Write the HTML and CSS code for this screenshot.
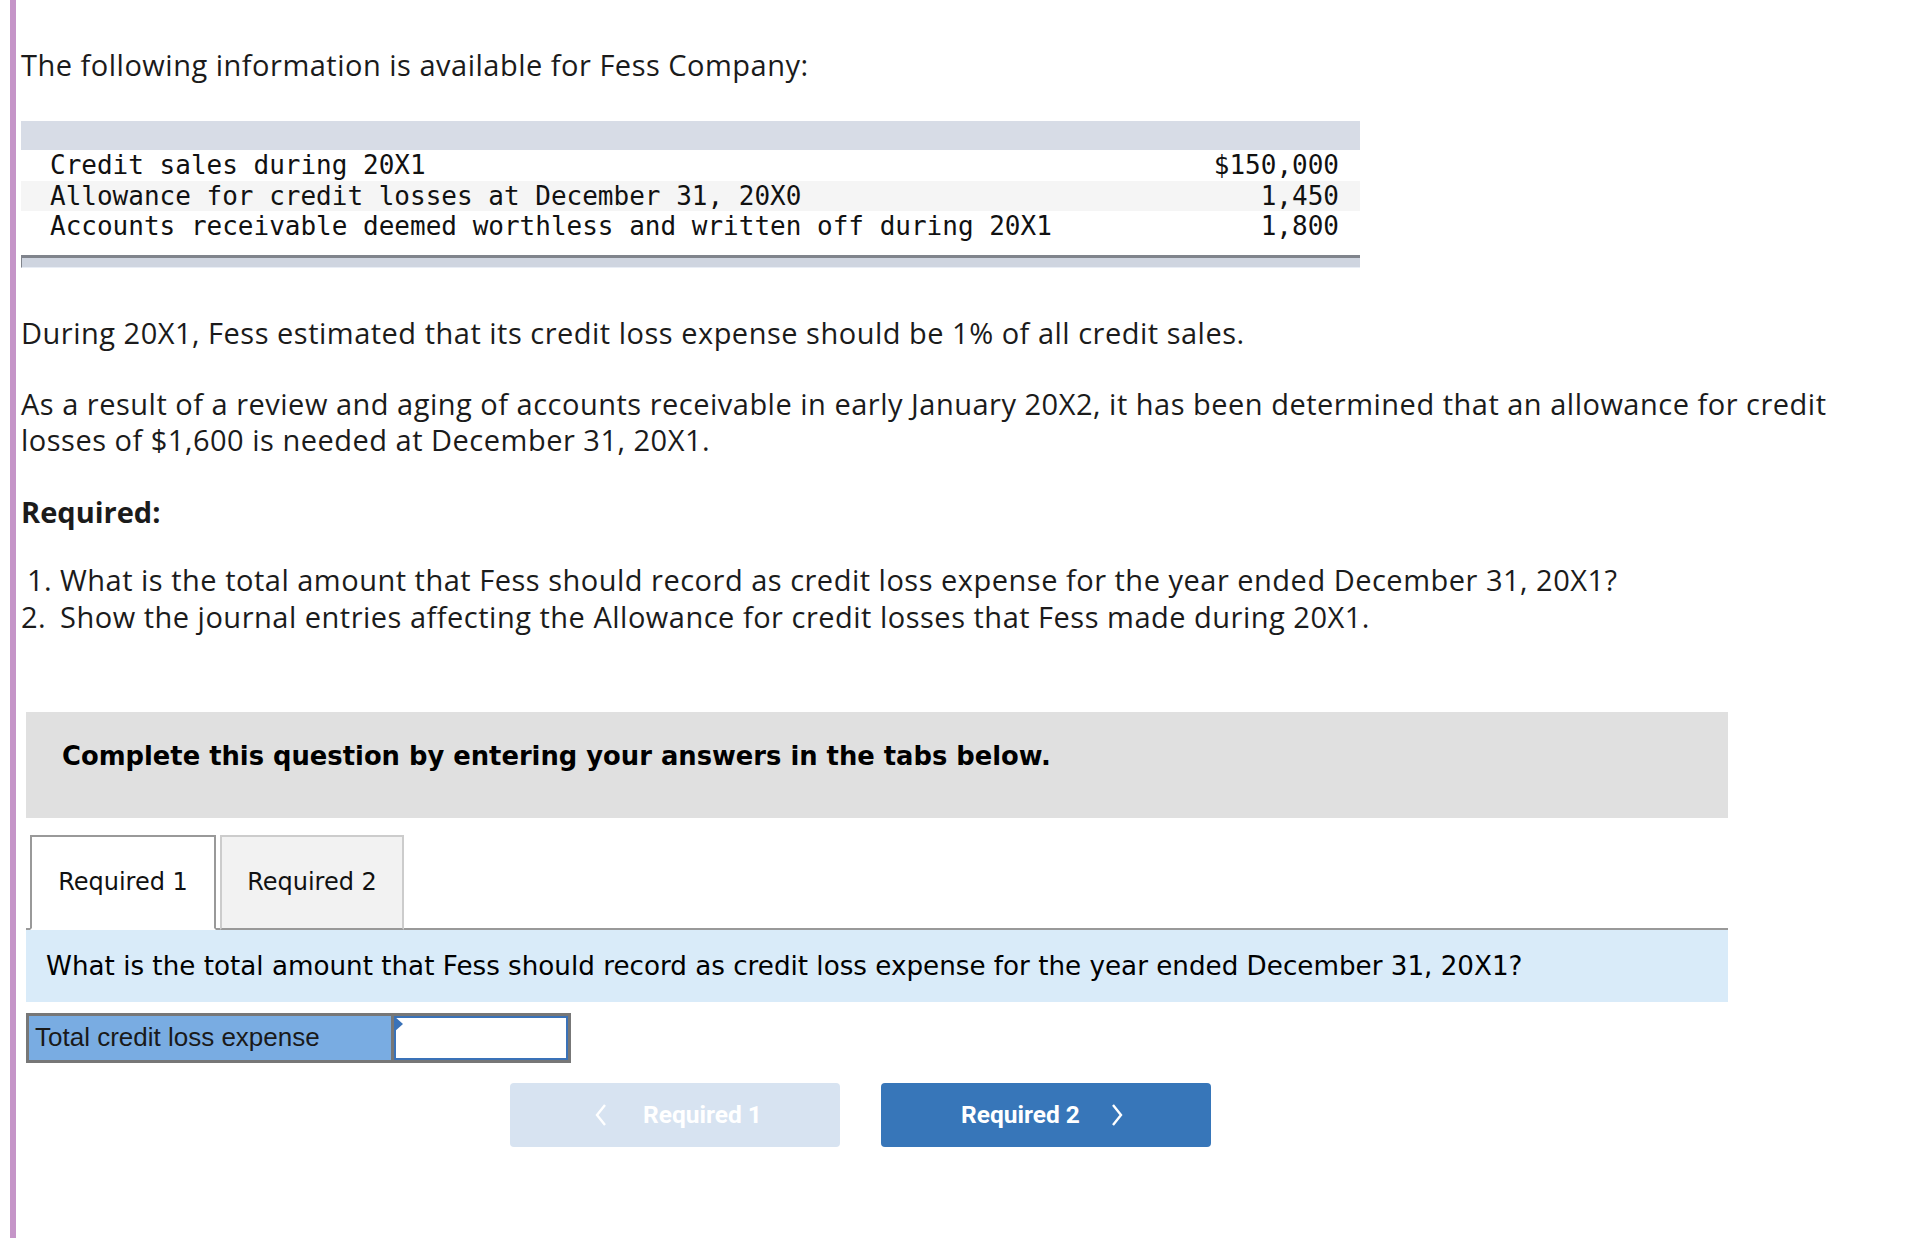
FILE: index.html
```html
<!DOCTYPE html>
<html>
<head>
<meta charset="utf-8">
<link rel="stylesheet" href="styles.css">
</head>
<body>
<div class="page">
  <p class="intro">The following information is available for Fess Company:</p>

  <div class="data-table">
    <div class="dt-head"></div>
    <div class="dt-row"><span>Credit sales during 20X1</span><span>$150,000</span></div>
    <div class="dt-row alt"><span>Allowance for credit losses at December 31, 20X0</span><span>1,450</span></div>
    <div class="dt-row"><span>Accounts receivable deemed worthless and written off during 20X1</span><span>1,800</span></div>
    <div class="dt-foot"></div>
  </div>

  <p class="para p-during">During 20X1, Fess estimated that its credit loss expense should be 1% of all credit sales.</p>
  <p class="para p-result">As a result of a review and aging of accounts receivable in early January 20X2, it has been determined that an allowance for credit losses of $1,600 is needed at December 31, 20X1.</p>
  <p class="para p-required">Required:</p>
  <ol class="req-list">
    <li><span class="num n1">1.</span><span>What is the total amount that Fess should record as credit loss expense for the year ended December 31, 20X1?</span></li>
    <li><span class="num">2.</span><span>Show the journal entries affecting the Allowance for credit losses that Fess made during 20X1.</span></li>
  </ol>

  <div class="instructions">Complete this question by entering your answers in the tabs below.</div>

  <div class="tabs">
    <div class="tab active">Required 1</div>
    <div class="tab">Required 2</div>
  </div>

  <div class="question">What is the total amount that Fess should record as credit loss expense for the year ended December 31, 20X1?</div>

  <div class="answer-row">
    <div class="answer-label">Total credit loss expense</div>
    <div class="answer-input"><span class="flag"></span></div>
  </div>

  <div class="nav">
    <div class="btn btn-prev">
      <svg class="chev" width="12" height="22" viewBox="0 0 12 22"><polyline points="10,1 2,11 10,21" fill="none" stroke="#ffffff" stroke-width="2.4"/></svg>
      <span>Required 1</span>
    </div>
    <div class="btn btn-next">
      <span>Required 2</span>
      <svg class="chev" width="12" height="22" viewBox="0 0 12 22"><polyline points="2,1 10,11 2,21" fill="none" stroke="#ffffff" stroke-width="2.4"/></svg>
    </div>
  </div>
</div>
</body>
</html>
```

FILE: styles.css
```css
html, body {
  margin: 0;
  padding: 0;
  background: #ffffff;
}

.page {
  margin-left: 10px;
  border-left: 6px solid #c595c8;
  min-height: 1238px;
  box-sizing: border-box;
  padding: 46px 0 0 5px;
  font-family: "Open Sans", "Lato", sans-serif;
  color: #1b1b1b;
}

.intro {
  margin: 0;
  font-size: 29px;
  letter-spacing: 0.5px;
  line-height: 38px;
}

.data-table {
  margin-top: 37px;
  width: 1339px;
  font-family: "DejaVu Sans Mono", monospace;
  font-size: 26px;
  color: #111;
}

.dt-head {
  height: 29px;
  background: #d7dce6;
}

.dt-row {
  display: flex;
  justify-content: space-between;
  height: 30.5px;
  line-height: 30px;
  padding: 0 21px 0 29px;
}

.dt-row.alt {
  background: #f5f5f5;
}

.dt-foot {
  margin-top: 13px;
  height: 9px;
  border-top: 3px solid #80848c;
  border-left: 1px solid #80848c;
  background: #cfd5e0;
  border-bottom: 1px solid #e8edf5;
}

.para {
  margin: 0;
  font-size: 29px;
  letter-spacing: 0.5px;
  line-height: 36px;
}

.p-during {
  margin-top: 47px;
}

.p-result {
  margin-top: 35px;
  padding-right: 20px;
}

.p-required {
  margin-top: 36px;
  font-weight: bold;
  letter-spacing: 0;
}

.req-list {
  list-style: none;
  margin: 31px 0 0 0;
  padding: 0;
  font-size: 29px;
  letter-spacing: 0.5px;
  line-height: 37px;
}

.req-list li {
  display: flex;
}

.num {
  width: 39px;
  flex: none;
}

.num.n1 {
  padding-left: 6px;
  width: 33px;
}

.instructions {
  margin: 77px 0 0 5px;
  width: 1702px;
  height: 106px;
  box-sizing: border-box;
  background: #e0e0e0;
  padding: 28px 0 0 36px;
  font-family: "DejaVu Sans", Verdana, sans-serif;
  font-weight: bold;
  font-size: 25.8px;
  line-height: 32px;
  color: #000;
}

.tabs {
  display: flex;
  align-items: flex-start;
  margin: 17px 0 0 5px;
  width: 1702px;
  padding-left: 4px;
  box-sizing: border-box;
  border-bottom: 2px solid #999;
}

.tab {
  width: 184px;
  height: 95px;
  box-sizing: border-box;
  margin-right: 4px;
  margin-bottom: -2px;
  display: flex;
  align-items: center;
  justify-content: center;
  font-family: "DejaVu Sans", Verdana, sans-serif;
  font-size: 24px;
  color: #111;
  background: #f2f2f2;
  border: 2px solid #cccccc;
  border-bottom: 2px solid #999;
}

.tab.active {
  width: 186px;
  background: #ffffff;
  border: 2px solid #999;
  border-bottom: 2px solid #ffffff;
}

.question {
  margin-left: 5px;
  width: 1702px;
  height: 72px;
  box-sizing: border-box;
  background: #d9ebf9;
  padding: 0 0 0 20px;
  display: flex;
  align-items: center;
  font-family: "DejaVu Sans", Verdana, sans-serif;
  font-size: 26.2px;
  color: #000;
}

.answer-row {
  display: flex;
  margin: 11px 0 0 5px;
  height: 50px;
}

.answer-label {
  width: 368px;
  box-sizing: border-box;
  background: #79ace2;
  border: 3px solid #777777;
  padding-left: 6px;
  display: flex;
  align-items: center;
  font-family: "Liberation Sans", Arial, sans-serif;
  font-size: 26px;
  color: #1a1a1a;
}

.answer-input {
  width: 177px;
  box-sizing: border-box;
  border: 3px solid #777777;
  border-left: none;
  background: #ffffff;
  position: relative;
  box-shadow: inset 0 0 0 2px #3a72b8;
}

.flag {
  position: absolute;
  left: 0;
  top: 0;
  width: 0;
  height: 0;
  border-top: 8px solid transparent;
  border-bottom: 8px solid transparent;
  border-left: 9px solid #3a72b8;
}

.nav {
  display: flex;
  gap: 41px;
  margin: 20px 0 0 489px;
}

.btn {
  width: 330px;
  height: 64px;
  box-sizing: border-box;
  border-radius: 4px;
  display: flex;
  align-items: center;
  justify-content: center;
  font-family: "Roboto", sans-serif;
  font-weight: bold;
  font-size: 24.5px;
  color: #ffffff;
}

.btn-prev {
  background: #d7e3f1;
  gap: 36px;
  padding-left: 7px;
}

.btn-next {
  background: #3776b9;
  gap: 31px;
  padding-right: 8px;
}

.chev {
  display: block;
}
```
